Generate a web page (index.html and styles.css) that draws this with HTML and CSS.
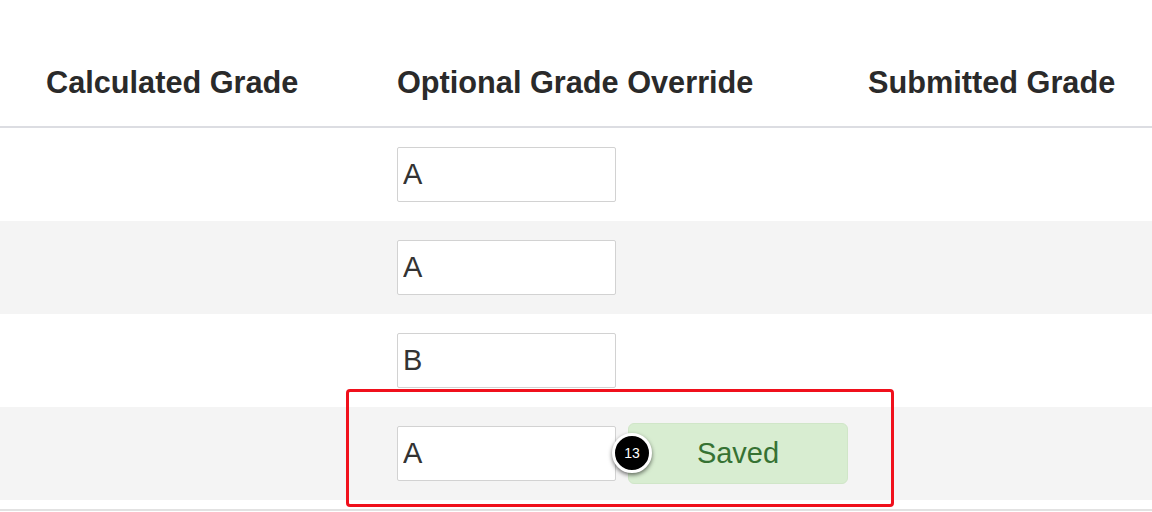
FILE: index.html
```html
<!DOCTYPE html>
<html lang="en">
<head>
<meta charset="utf-8">
<title>Grades</title>
<link rel="stylesheet" href="styles.css">
</head>
<body>
<div class="grades">
  <div class="grades-head">
    <div class="th">Calculated Grade</div>
    <div class="th">Optional Grade Override</div>
    <div class="th">Submitted Grade</div>
  </div>
  <div class="grades-row">
    <div class="td"></div>
    <div class="td edit-cell"><input class="grade-input" type="text" value="A"></div>
    <div class="td"></div>
  </div>
  <div class="grades-row alt">
    <div class="td"></div>
    <div class="td edit-cell"><input class="grade-input" type="text" value="A"></div>
    <div class="td"></div>
  </div>
  <div class="grades-row">
    <div class="td"></div>
    <div class="td edit-cell"><input class="grade-input" type="text" value="B"></div>
    <div class="td"></div>
  </div>
  <div class="grades-row alt highlighted">
    <div class="td"></div>
    <div class="td edit-cell">
      <input class="grade-input" type="text" value="A">
      <div class="saved-btn">Saved</div>
      <span class="step-badge">13</span>
    </div>
    <div class="td"></div>
    <div class="callout-box"></div>
  </div>
  <div class="grades-end"></div>
</div>
</body>
</html>
```

FILE: styles.css
```css
* {
  box-sizing: border-box;
}

html, body {
  margin: 0;
  padding: 0;
  background: #ffffff;
}

body {
  font-family: "Liberation Sans", Arial, Helvetica, sans-serif;
  color: #2f2f2f;
  width: 1152px;
  height: 512px;
  overflow: hidden;
}

.grades {
  width: 1152px;
}

.grades-head,
.grades-row {
  display: grid;
  grid-template-columns: 351px 471px 1fr;
  padding-left: 46px;
}

.grades-head {
  height: 128px;
  padding-top: 65px;
  border-bottom: 2px solid #dcdde2;
}

.th {
  font-size: 30.7px;
  line-height: 35px;
  font-weight: 700;
  color: #2a2a2a;
  white-space: nowrap;
}

.grades-row {
  height: 93px;
  align-items: center;
  position: relative;
}

.grades-row.alt {
  background: #f4f4f4;
}

.edit-cell {
  display: flex;
  align-items: center;
  gap: 11px;
  position: relative;
}

.grade-input {
  width: 219px;
  height: 55px;
  border: 1px solid #d2d2d2;
  border-radius: 2px;
  background: #ffffff;
  padding: 0 5px;
  font-family: "Liberation Sans", Arial, Helvetica, sans-serif;
  font-size: 29px;
  color: #333333;
  outline: none;
  margin: 0;
}

.saved-btn {
  width: 220px;
  height: 61px;
  margin-left: 1px;
  border-radius: 6px;
  background: #d8edd1;
  border: 1px solid #d0e6c8;
  color: #367233;
  font-size: 29px;
  display: flex;
  align-items: center;
  justify-content: center;
}

.step-badge {
  position: absolute;
  left: 215px;
  top: 50%;
  margin-top: -21px;
  width: 40px;
  height: 40px;
  border-radius: 50%;
  background: #000000;
  border: 3px solid #ffffff;
  box-shadow: 0 2px 4px rgba(0, 0, 0, 0.55);
  color: #ffffff;
  font-size: 14px;
  display: flex;
  align-items: center;
  justify-content: center;
}

.callout-box {
  position: absolute;
  left: 346px;
  top: -18px;
  width: 548px;
  height: 118px;
  border: 3px solid #f0101c;
  border-radius: 4px;
  pointer-events: none;
}

.grades-end {
  height: 11px;
  border-bottom: 2px solid #e2e2e2;
}
```
